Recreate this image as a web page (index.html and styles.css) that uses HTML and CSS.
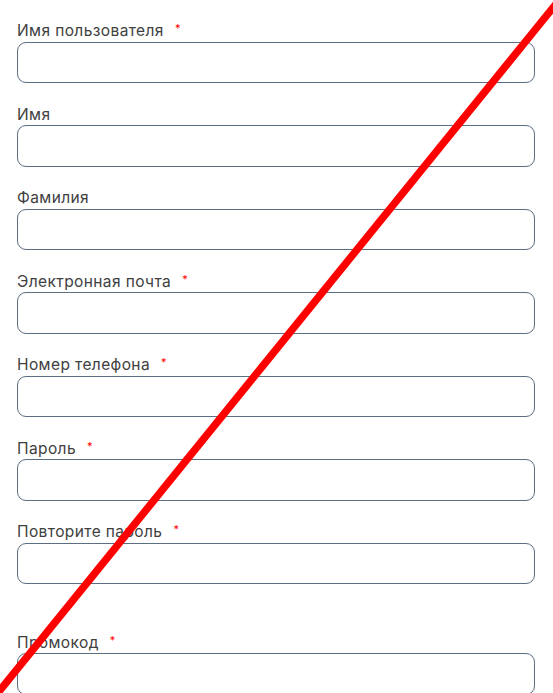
FILE: index.html
```html
<!DOCTYPE html>
<html lang="ru">
<head>
<meta charset="utf-8">
<title>Регистрация</title>
<link rel="stylesheet" href="styles.css">
</head>
<body>
<form class="form">
  <div class="field">
    <label class="label">Имя пользователя<span class="req">*</span></label>
    <input class="input" type="text">
  </div>
  <div class="field">
    <label class="label">Имя</label>
    <input class="input" type="text">
  </div>
  <div class="field">
    <label class="label">Фамилия</label>
    <input class="input" type="text">
  </div>
  <div class="field">
    <label class="label">Электронная почта<span class="req">*</span></label>
    <input class="input" type="email">
  </div>
  <div class="field">
    <label class="label">Номер телефона<span class="req">*</span></label>
    <input class="input" type="tel">
  </div>
  <div class="field">
    <label class="label">Пароль<span class="req">*</span></label>
    <input class="input" type="password">
  </div>
  <div class="field field-last-group">
    <label class="label">Повторите пароль<span class="req">*</span></label>
    <input class="input" type="password">
  </div>
  <div class="field">
    <label class="label">Промокод<span class="req">*</span></label>
    <input class="input" type="text">
  </div>
</form>
<svg class="cross" width="553" height="693" viewBox="0 0 553 693" aria-hidden="true">
  <line x1="560" y1="-1" x2="-3" y2="694" stroke="#ff0000" stroke-width="7.5"/>
</svg>
</body>
</html>
```

FILE: styles.css
```css
html, body {
  margin: 0;
  padding: 0;
  background: #ffffff;
}

body {
  font-family: Inter, "Noto Sans", "Liberation Sans", sans-serif;
  color: #404040;
}

.form {
  display: flex;
  flex-direction: column;
  gap: 22.5px;
  padding: 22px 18px 40px 17px;
}

.field {
  display: flex;
  flex-direction: column;
  gap: 1.5px;
}

.field-last-group {
  margin-bottom: 27px;
}

.label {
  display: block;
  height: 18px;
  font-size: 15.5px;
  line-height: 18px;
  font-weight: 400;
  letter-spacing: 0.4px;
  color: #404040;
}

.req {
  color: #ff0000;
  font-size: 11px;
  line-height: 0;
  margin-left: 11px;
  vertical-align: 4px;
}

.input {
  box-sizing: border-box;
  width: 100%;
  height: 41.5px;
  margin: 0;
  padding: 0 12px;
  border: 1px solid #5b6e82;
  border-radius: 9px;
  background: #ffffff;
  font: inherit;
  outline: none;
}

.cross {
  position: fixed;
  top: 0;
  left: 0;
  pointer-events: none;
}
```
